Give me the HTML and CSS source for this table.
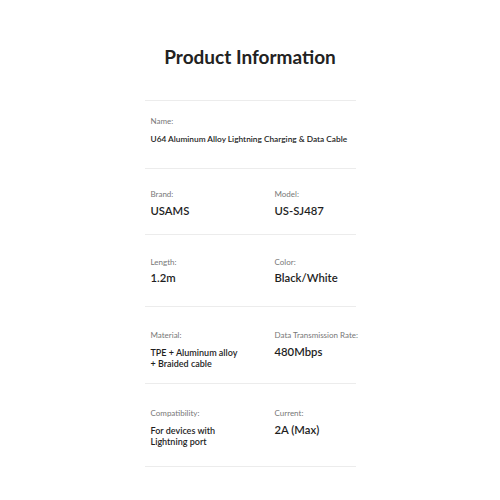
FILE: index.html
```
<!DOCTYPE html>
<html>
<head>
<meta charset="utf-8">
<link rel="stylesheet" href="styles.css">
</head>
<body>
<div class="page">
  <h1 class="title">Product Information</h1>
  <div class="table">
    <div class="row row-1">
      <div class="cell">
        <div class="label">Name:</div>
        <div class="value name">U64 Aluminum Alloy Lightning Charging &amp; Data Cable</div>
      </div>
    </div>
    <div class="row row-2">
      <div class="cell">
        <div class="label">Brand:</div>
        <div class="value">USAMS</div>
      </div>
      <div class="cell">
        <div class="label">Model:</div>
        <div class="value">US-SJ487</div>
      </div>
    </div>
    <div class="row row-3">
      <div class="cell">
        <div class="label">Length:</div>
        <div class="value">1.2m</div>
      </div>
      <div class="cell">
        <div class="label">Color:</div>
        <div class="value">Black/White</div>
      </div>
    </div>
    <div class="row row-4">
      <div class="cell">
        <div class="label">Material:</div>
        <div class="value small">TPE + Aluminum alloy<br>+ Braided cable</div>
      </div>
      <div class="cell">
        <div class="label">Data Transmission Rate:</div>
        <div class="value">480Mbps</div>
      </div>
    </div>
    <div class="row row-5">
      <div class="cell">
        <div class="label">Compatibility:</div>
        <div class="value small">For devices with<br>Lightning port</div>
      </div>
      <div class="cell">
        <div class="label">Current:</div>
        <div class="value">2A (Max)</div>
      </div>
    </div>
  </div>
</div>
</body>
</html>
```
FILE: styles.css
```
html, body {
  margin: 0;
  padding: 0;
  background: #ffffff;
}
body {
  font-family: Lato, "Open Sans", sans-serif;
  color: #222;
  width: 500px;
  height: 500px;
}
.page {
  padding-top: 42px;
  display: flex;
  flex-direction: column;
  align-items: center;
}
.title {
  margin: 0;
  font-size: 19px;
  font-weight: 700;
  line-height: 30px;
  color: #222;
}
.table {
  margin-top: 28px;
  width: 211px;
  border-top: 1px solid #ececec;
}
.row {
  box-sizing: border-box;
  display: grid;
  grid-template-columns: 124px 1fr;
  align-content: start;
  padding-left: 6px;
  border-bottom: 1px solid #ececec;
}
.row-1 { height: 68px; padding-top: 15px; }
.row-2 { height: 66px; padding-top: 20px; }
.row-3 { height: 72px; padding-top: 22px; }
.row-4 { height: 77px; padding-top: 23px; }
.row-5 { height: 83px; padding-top: 24px; }
.label {
  font-size: 8px;
  line-height: 10px;
  color: #777;
  white-space: nowrap;
}
.value {
  margin-top: 5px;
  font-size: 11.3px;
  font-weight: 600;
  line-height: 14px;
  color: #1e1e1e;
  white-space: nowrap;
}
.value.name {
  font-size: 8.3px;
  line-height: 11px;
  margin-top: 8px;
}
.value.small {
  font-size: 9px;
  line-height: 11px;
  margin-top: 6.5px;
}
.row-3 .value { margin-top: 4px; }
```
